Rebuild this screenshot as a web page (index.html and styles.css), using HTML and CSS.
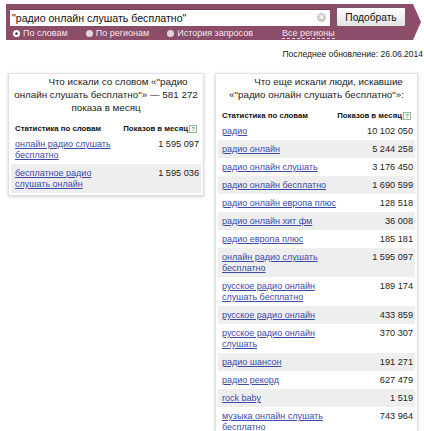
FILE: index.html
```html
<!DOCTYPE html>
<html lang="ru">
<head>
<meta charset="utf-8">
<title>Подбор слов</title>
<link rel="stylesheet" href="styles.css">
</head>
<body>
<div class="bar">
  <div class="bar-top">
    <div class="input">"радио онлайн слушать бесплатно"<span class="clear">×</span></div>
    <button class="btn">Подобрать</button>
  </div>
  <div class="bar-opts">
    <span class="opt opt-words"><span class="radio on"></span>По словам</span>
    <span class="opt opt-regions"><span class="radio"></span>По регионам</span>
    <span class="opt opt-history"><span class="radio"></span>История запросов</span>
    <span class="all-regions">Все регионы</span>
  </div>
</div>
<div class="updated">Последнее обновление: 26.06.2014</div>
<div class="cards">
  <div class="card card-left">
    <div class="title">Что искали со словом «"радио<br>онлайн слушать бесплатно"» — 581 272<br>показа в месяц</div>
    <table class="stats">
      <tr class="head"><th>Статистика по словам</th><th class="num">Показов в месяц<span class="q">?</span></th></tr>
      <tr><td><a href="#">онлайн радио слушать<br>бесплатно</a></td><td class="num">1 595 097</td></tr>
      <tr class="alt"><td><a href="#">бесплатное радио<br>слушать онлайн</a></td><td class="num">1 595 036</td></tr>
    </table>
  </div>
  <div class="card card-right">
    <div class="title">Что еще искали люди, искавшие<br>«"радио онлайн слушать бесплатно"»:</div>
    <table class="stats">
      <tr class="head"><th>Статистика по словам</th><th class="num">Показов в месяц<span class="q">?</span></th></tr>
      <tr><td><a href="#">радио</a></td><td class="num">10 102 050</td></tr>
      <tr class="alt"><td><a href="#">радио онлайн</a></td><td class="num">5 244 258</td></tr>
      <tr><td><a href="#">радио онлайн слушать</a></td><td class="num">3 176 450</td></tr>
      <tr class="alt"><td><a href="#">радио онлайн бесплатно</a></td><td class="num">1 690 599</td></tr>
      <tr><td><a href="#">радио онлайн европа плюс</a></td><td class="num">128 518</td></tr>
      <tr class="alt"><td><a href="#">радио онлайн хит фм</a></td><td class="num">36 008</td></tr>
      <tr><td><a href="#">радио европа плюс</a></td><td class="num">185 181</td></tr>
      <tr class="alt"><td><a href="#">онлайн радио слушать<br>бесплатно</a></td><td class="num">1 595 097</td></tr>
      <tr><td><a href="#">русское радио онлайн<br>слушать бесплатно</a></td><td class="num">189 174</td></tr>
      <tr class="alt"><td><a href="#">русское радио онлайн</a></td><td class="num">433 859</td></tr>
      <tr><td><a href="#">русское радио онлайн<br>слушать</a></td><td class="num">370 307</td></tr>
      <tr class="alt"><td><a href="#">радио шансон</a></td><td class="num">191 271</td></tr>
      <tr><td><a href="#">радио рекорд</a></td><td class="num">627 479</td></tr>
      <tr class="alt"><td><a href="#">rock baby</a></td><td class="num">1 519</td></tr>
      <tr><td><a href="#">музыка онлайн слушать<br>бесплатно</a></td><td class="num">743 964</td></tr>
    </table>
  </div>
</div>
</body>
</html>
```
FILE: styles.css
```css
html, body {
  margin: 0;
  padding: 0;
  background: #fff;
}
body {
  font-family: "Liberation Sans", Arial, sans-serif;
  color: #222;
  width: 424px;
  overflow: hidden;
}
.bar {
  margin: 4px 0 0 6px;
  width: 415px;
  height: 36px;
  box-sizing: border-box;
  padding: 3px 0 0 4px;
  background: #8b4d69;
  clip-path: polygon(0 0, 407px 0, 415px 50%, 407px 100%, 0 100%);
}
.bar-top {
  display: flex;
  align-items: center;
  height: 20px;
}
.input {
  position: relative;
  width: 320px;
  height: 17px;
  box-sizing: border-box;
  background: #fff;
  border-top: 1px solid #6d3a52;
  padding: 0 0 0 2px;
  font-size: 10.6px;
  line-height: 16px;
  color: #111;
}
.clear {
  position: absolute;
  right: 4px;
  top: 3px;
  width: 9px;
  height: 9px;
  border-radius: 50%;
  background: #c8c8c8;
  color: #fff;
  font-size: 9px;
  line-height: 9px;
  text-align: center;
  font-weight: bold;
}
.btn {
  margin-left: 6px;
  width: 70px;
  height: 20px;
  padding: 0;
  border: 1px solid #7a5a68;
  border-radius: 2px;
  background: linear-gradient(#ffffff, #e2e2e2);
  font-family: "Liberation Sans", Arial, sans-serif;
  font-size: 10.2px;
  color: #111;
}
.bar-opts {
  display: flex;
  align-items: center;
  height: 11px;
  margin-top: 1px;
  font-size: 9px;
  line-height: 9px;
  color: #f3e6ec;
}
.opt {
  display: flex;
  align-items: center;
}
.radio {
  width: 7px;
  height: 7px;
  border-radius: 50%;
  background: #e4d4dc;
  margin-right: 3px;
  box-sizing: border-box;
}
.radio.on {
  background: #fff;
  border: 2px solid #fff;
  box-shadow: inset 0 0 0 2px #444;
}
.opt-words { margin-left: 3px; }
.opt-regions { margin-left: 18px; }
.opt-history { margin-left: 18px; }
.all-regions {
  margin-left: 29px;
  border-bottom: 1px dashed #e8d4de;
  line-height: 9px;
}
.updated {
  text-align: right;
  font-size: 8.5px;
  line-height: 10px;
  margin-top: 9px;
  padding-right: 1px;
  color: #222;
}
.cards {
  display: flex;
  align-items: flex-start;
  gap: 11px;
  margin-top: 14px;
  padding-left: 8px;
}
.card {
  box-sizing: border-box;
  border: 1px solid #e0e0e0;
  box-shadow: 0 1px 3px rgba(0, 0, 0, 0.18);
  padding: 0 2px 2px;
  background: #fff;
}
.card-left { width: 196px; }
.card-right { width: 203px; }
.title {
  text-align: center;
  font-size: 9.8px;
  line-height: 13px;
  padding-top: 1px;
  color: #222;
  white-space: nowrap;
  text-indent: 24px;
}
.stats {
  width: 100%;
  border-collapse: collapse;
  margin-top: 10px;
}
.stats th {
  font-size: 7.8px;
  font-weight: bold;
  line-height: 10px;
  text-align: left;
  padding: 0 0 1px 4px;
  color: #111;
  white-space: nowrap;
}
.stats th.num {
  text-align: right;
  padding: 0 4px 1px 0;
}
.q {
  display: inline-block;
  width: 6px;
  height: 6px;
  border: 1px solid #9ab59a;
  font-size: 6px;
  line-height: 6px;
  text-align: center;
  color: #5a9a5a;
  margin-left: 1px;
  vertical-align: 0;
  text-indent: 0;
}
.stats td {
  font-size: 9px;
  line-height: 11px;
  padding: 4px 0 3px 4px;
  vertical-align: top;
  white-space: nowrap;
}
.stats td.num {
  text-align: right;
  color: #222;
  font-size: 9.2px;
  padding: 4px 2px 3px 0;
}
.stats tr.alt td { background: #eeeeee; }
.stats a {
  color: #3a4aa8;
  text-decoration: underline;
}
```
